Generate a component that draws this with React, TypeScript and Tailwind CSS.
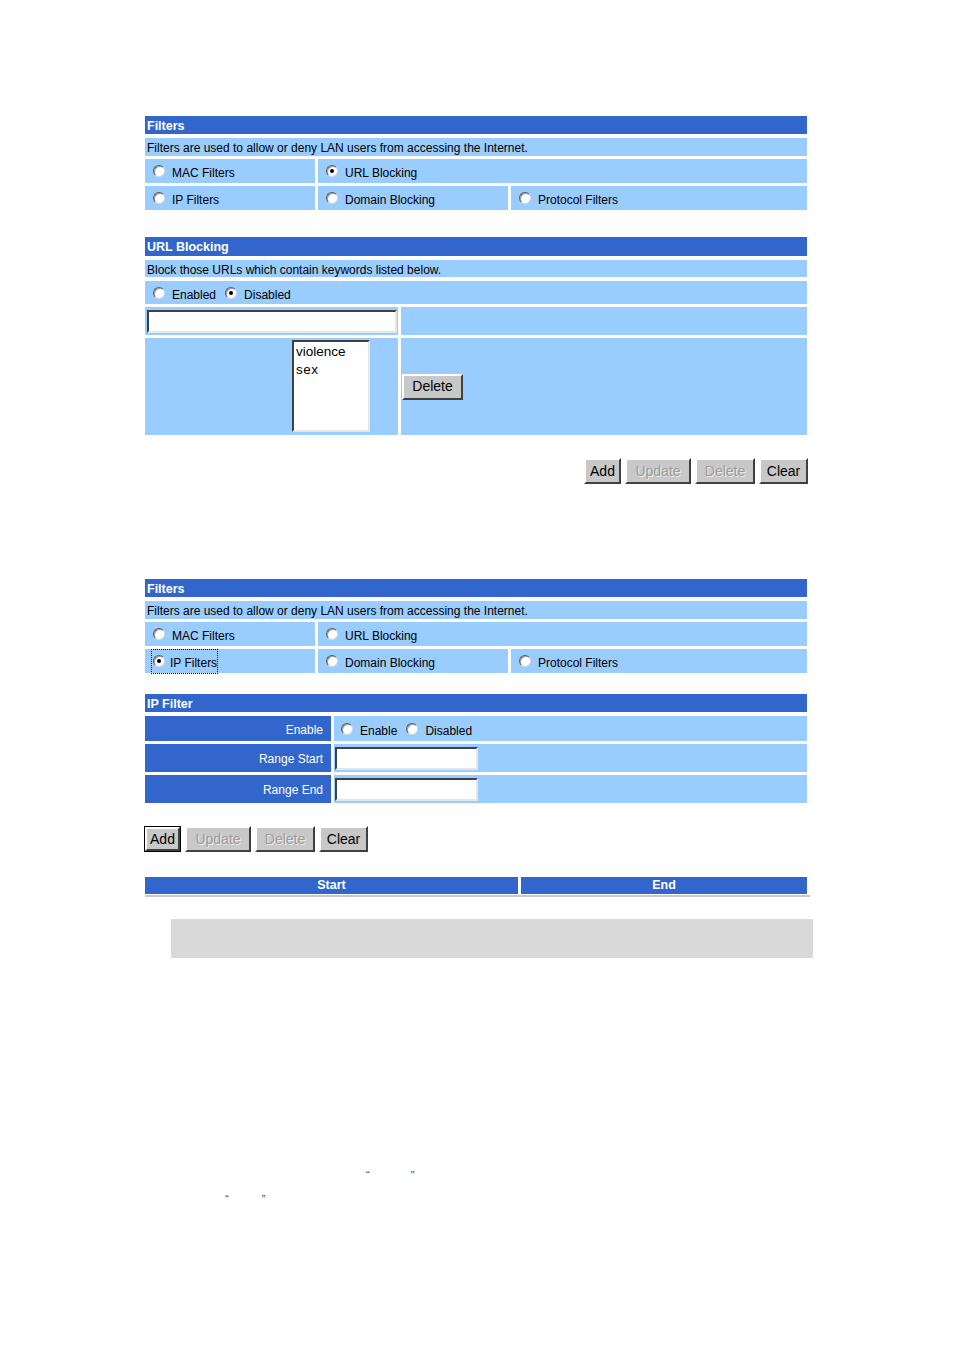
import type { ReactNode } from 'react';

const font = { fontFamily: '"Liberation Sans", Arial, sans-serif' };

const Radio = ({ checked = false }: { checked?: boolean }) => (
  <span className="relative inline-block h-[12px] w-[12px] shrink-0 rounded-full border border-[#5a5a5a] border-b-[#d8d8d8] border-r-[#d8d8d8] bg-white shadow-[inset_1px_1px_0_#9a9a9a]">
    {checked && (
      <span className="absolute left-[3px] top-[3px] h-[4px] w-[4px] rounded-full bg-black" />
    )}
  </span>
);

const Option = ({ label, checked }: { label: string; checked?: boolean }) => (
  <span className="inline-flex items-center gap-[7px]">
    <Radio checked={checked} />
    <span className="pt-[4px]">{label}</span>
  </span>
);

const Header = ({ children, className = '' }: { children: ReactNode; className?: string }) => (
  <div
    className={`flex items-center bg-[#3366cc] pl-[2px] pt-[2px] text-[12.5px] font-bold leading-none text-white ${className}`}
  >
    {children}
  </div>
);

const Cell = ({ children, className = '' }: { children?: ReactNode; className?: string }) => (
  <div className={`flex items-center bg-[#99ccff] ${className}`}>{children}</div>
);

const Button = ({
  label,
  disabled = false,
  isDefault = false,
  className = '',
}: {
  label: string;
  disabled?: boolean;
  isDefault?: boolean;
  className?: string;
}) => (
  <div
    className={`flex h-[26px] items-center justify-center ${
      isDefault ? 'border border-black' : ''
    } ${className}`}
  >
    <div className="flex h-full w-full items-center justify-center border-2 border-b-[#404040] border-l-white border-r-[#404040] border-t-white bg-[#c8c8c8] text-[14px]">
      <span
        className={
          disabled ? 'text-[#9c9c9c] [text-shadow:1px_1px_0_#ececec]' : 'text-black'
        }
      >
        {label}
      </span>
    </div>
  </div>
);

const TextInput = ({ className = '' }: { className?: string }) => (
  <div
    className={`border-2 border-b-[#e6e6e6] border-l-[#404040] border-r-[#e6e6e6] border-t-[#404040] bg-white ${className}`}
  />
);

const FiltersTable = ({ selected }: { selected: 'url' | 'ip' }) => (
  <div className="w-[662px] text-[12px] text-black">
    <Header className="h-[18px]">Filters</Header>
    <Cell className="mt-[4px] h-[18px] pl-[2px] pt-[2px]">
      Filters are used to allow or deny LAN users from accessing the Internet.
    </Cell>
    <div className="mt-[3px] flex h-[24px] gap-[3px]">
      <Cell className="w-[170px] pl-[8px]">
        <Option label="MAC Filters" />
      </Cell>
      <Cell className="flex-1 pl-[8px]">
        <Option label="URL Blocking" checked={selected === 'url'} />
      </Cell>
    </div>
    <div className="mt-[3px] flex h-[24px] gap-[3px]">
      <Cell className="w-[170px] pl-[6px]">
        {selected === 'ip' ? (
          <span className="inline-flex items-center gap-[5px] border border-dotted border-black py-[1px] pl-[1px]">
            <Radio checked />
            <span className="pt-[3px]">IP Filters</span>
          </span>
        ) : (
          <span className="pl-[2px]">
            <Option label="IP Filters" />
          </span>
        )}
      </Cell>
      <Cell className="w-[190px] pl-[8px]">
        <Option label="Domain Blocking" />
      </Cell>
      <Cell className="flex-1 pl-[8px]">
        <Option label="Protocol Filters" />
      </Cell>
    </div>
  </div>
);

export default function App() {
  return (
    <div className="min-h-[1349px] w-[954px] bg-white pt-[116px]" style={font}>
      <div className="ml-[145px]">
        <FiltersTable selected="url" />

        <div className="mt-[27px] w-[662px] text-[12px] text-black">
          <Header className="h-[19px]">URL Blocking</Header>
          <Cell className="mt-[4px] h-[17px] pl-[2px] pt-[2px]">
            Block those URLs which contain keywords listed below.
          </Cell>
          <Cell className="mt-[4px] h-[23px] pl-[8px]">
            <span className="inline-flex items-center gap-[9px]">
              <Option label="Enabled" />
              <Option label="Disabled" checked />
            </span>
          </Cell>
          <div className="mt-[3px] flex h-[28px] gap-[3px]">
            <Cell className="w-[253px] pl-[2px]">
              <TextInput className="h-[23px] w-[250px]" />
            </Cell>
            <Cell className="flex-1" />
          </div>
          <div className="mt-[3px] flex h-[97px] gap-[3px]">
            <Cell className="w-[253px] items-start pl-[147px] pt-[2px]">
              <div className="h-[92px] w-[78px] border-2 border-b-[#e6e6e6] border-l-[#404040] border-r-[#e6e6e6] border-t-[#404040] bg-white pl-[2px] pt-[1px] text-[13.5px] leading-[18px]">
                <div>violence</div>
                <div className="tracking-[0.5px]">sex</div>
              </div>
            </Cell>
            <Cell className="flex-1 pl-[1px]">
              <Button label="Delete" className="w-[61px]" />
            </Cell>
          </div>
        </div>

        <div className="mt-[23px] flex w-[663px] justify-end gap-[4px]">
          <Button label="Add" className="w-[37px]" />
          <Button label="Update" disabled className="w-[66px]" />
          <Button label="Delete" disabled className="w-[60px]" />
          <Button label="Clear" className="w-[49px]" />
        </div>

        <div className="mt-[95px]">
          <FiltersTable selected="ip" />
        </div>

        <div className="mt-[21px] w-[662px] text-[12px] text-black">
          <Header className="h-[18px]">IP Filter</Header>
          <div className="mt-[4px] flex h-[25px] gap-[3px]">
            <div className="flex w-[186px] items-center justify-end bg-[#3366cc] pr-[8px] pt-[2px] text-white">
              Enable
            </div>
            <Cell className="flex-1 pl-[7px]">
              <span className="inline-flex items-center gap-[9px]">
                <Option label="Enable" />
                <Option label="Disabled" />
              </span>
            </Cell>
          </div>
          <div className="mt-[3px] flex h-[28px] gap-[3px]">
            <div className="flex w-[186px] items-center justify-end bg-[#3366cc] pr-[8px] pt-[2px] text-white">
              Range Start
            </div>
            <Cell className="flex-1 pl-[1px]">
              <TextInput className="h-[23px] w-[143px]" />
            </Cell>
          </div>
          <div className="mt-[3px] flex h-[28px] gap-[3px]">
            <div className="flex w-[186px] items-center justify-end bg-[#3366cc] pr-[8px] pt-[2px] text-white">
              Range End
            </div>
            <Cell className="flex-1 pl-[1px]">
              <TextInput className="h-[23px] w-[143px]" />
            </Cell>
          </div>
        </div>

        <div className="-ml-[1px] mt-[23px] flex gap-[4px]">
          <Button label="Add" isDefault className="w-[37px]" />
          <Button label="Update" disabled className="w-[66px]" />
          <Button label="Delete" disabled className="w-[60px]" />
          <Button label="Clear" className="w-[49px]" />
        </div>

        <div className="mt-[24px] w-[665px] border-b-2 border-[#c8c8c8] pb-[1px]">
          <div className="flex h-[18px] w-[662px] gap-[3px] pt-[1px] text-[12.5px] font-bold text-white">
            <div className="flex w-[373px] items-center justify-center bg-[#3366cc]">Start</div>
            <div className="flex flex-1 items-center justify-center bg-[#3366cc]">End</div>
          </div>
        </div>
      </div>

      <div className="ml-[171px] mt-[22px] h-[39px] w-[642px] bg-[#d9d9d9]" />

      <div className="mt-[210px] h-[14px] pl-[366px] text-[11px] leading-[14px] text-[#444]">
        <span>“</span>
        <span className="ml-[41px]">”</span>
      </div>
      <div className="mt-[10px] h-[14px] pl-[225px] text-[11px] leading-[14px] text-[#444]">
        <span>“</span>
        <span className="ml-[33px]">”</span>
      </div>
    </div>
  );
}
